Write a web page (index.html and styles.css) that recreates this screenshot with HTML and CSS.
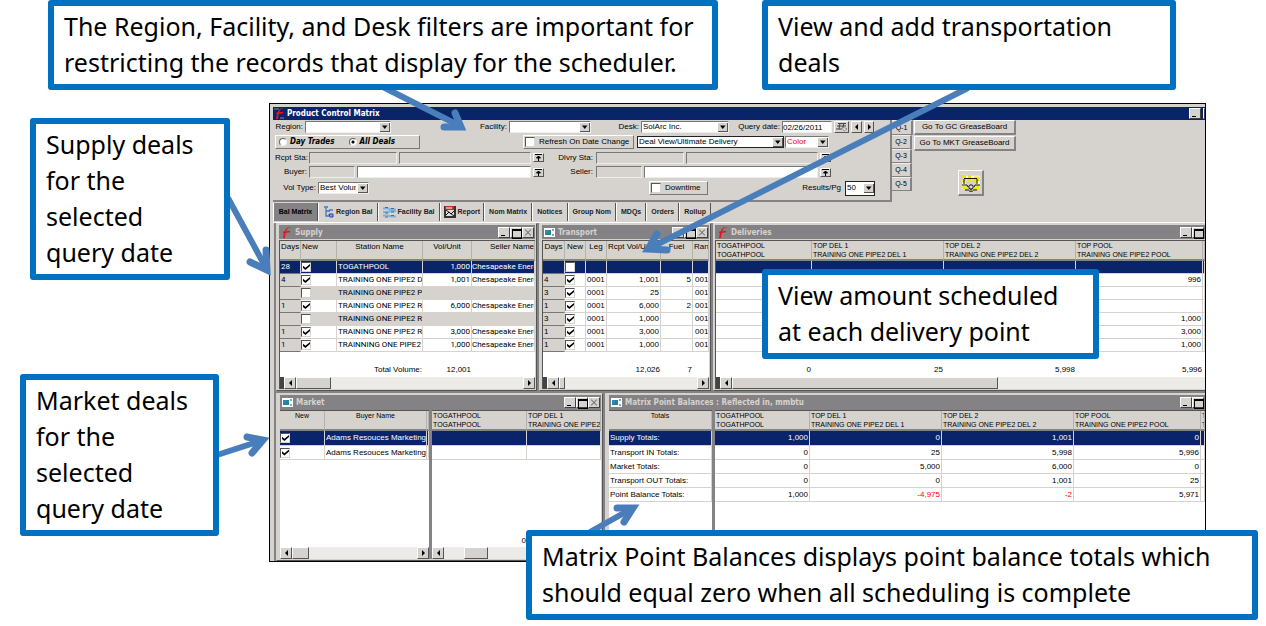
FILE: index.html
```html
<!DOCTYPE html>
<html lang="en">
<head>
<meta charset="utf-8">
<title>Product Control Matrix</title>
<link rel="stylesheet" href="styles.css">
</head>
<body>
<svg class="defs" aria-hidden="true">
  <symbol id="flame" viewBox="0 0 11 11"><path d="M0 1h5M6 10h4" stroke="#888" stroke-width="1"/><path d="M11 0C6 0 5 3 4 11H2C3 6 4 1 8 0z" fill="#e8141c"/><path d="M2 5.500l7-1" stroke="#e8141c" stroke-width="1.500"/></symbol>
  <symbol id="form" viewBox="0 0 11 9"><path d="M0 0h11v9H0z" fill="#fff"/><path d="M1 2h6v5H1z" fill="#1d8a8a"/><path d="M1 2h3v3H1z" fill="#3b7fd0"/><path d="M8 2h2M8 7h2" stroke="#247"/></symbol>
</svg>
<main class="page">
  <section class="app">
    <header class="titlebar">
      <svg class="logo"><use href="#flame"/></svg>
      <h1>Product Control Matrix</h1>
      <button class="wb min" aria-label="Minimize"></button><button class="wb edge" aria-label="Maximize"></button>
    </header>

    <div class="top">
      <form class="filters">
        <div class="row r1">
          <label for="region">Region:</label><select id="region"><option></option></select>
          <label for="facility">Facility:</label><select id="facility"><option></option></select>
          <label for="desk">Desk:</label><select id="desk"><option>SolArc Inc.</option></select>
          <label for="qd">Query date:</label><input id="qd" class="txt" value="02/26/2011">
          <button type="button" class="btn" aria-label="Calendar"><svg width="13" height="10" viewBox="0 0 13 10"><path d="M3 1.500h8M2 4h9M1 7h6M5 1l-1 6M9 1l-1 4" fill="none" stroke="#444"/><path d="M7 5l5 2-3 2z" fill="#fff" stroke="#555" stroke-width=".6"/></svg></button>
          <button type="button" class="btn" aria-label="Previous day"><i class="tri l"></i></button>
          <button type="button" class="btn" aria-label="Next day"><i class="tri r"></i></button>
        </div>
        <div class="row r2">
          <div class="raised trades">
            <label><input type="radio" name="t">Day Trades</label>
            <label><input type="radio" name="t" checked>All Deals</label>
          </div>
          <label class="raised check"><input type="checkbox">Refresh On Date Change</label>
          <select aria-label="View" class="dark"><option>Deal View/Ultimate Delivery</option></select>
          <select aria-label="Color" class="red"><option>Color</option></select>
        </div>
        <div class="row r3">
          <label for="rs">Rcpt Sta:</label><input id="rs" class="txt off"><input class="txt off" aria-label="Receipt station name">
          <button type="button" class="btn" aria-label="Find receipt station"><svg class="pin" viewBox="0 0 7 7"><path d="M0 .5h7M3.500 2v5M1.500 4l2-2 2 2z" stroke="#000"/></svg></button>
          <label for="ds">Dlvry Sta:</label><input id="ds" class="txt off"><input class="txt off" aria-label="Delivery station name">
          <button type="button" class="btn" aria-label="Find delivery station"><svg class="pin" viewBox="0 0 7 7"><path d="M0 .5h7M3.500 2v5M1.500 4l2-2 2 2z" stroke="#000"/></svg></button>
        </div>
        <div class="row r4">
          <label for="bu">Buyer:</label><input id="bu" class="txt off"><input class="txt" aria-label="Buyer name">
          <button type="button" class="btn" aria-label="Find buyer"><svg class="pin" viewBox="0 0 7 7"><path d="M0 .5h7M3.500 2v5M1.500 4l2-2 2 2z" stroke="#000"/></svg></button>
          <label for="se">Seller:</label><input id="se" class="txt off"><input class="txt" aria-label="Seller name">
          <button type="button" class="btn" aria-label="Find seller"><svg class="pin" viewBox="0 0 7 7"><path d="M0 .5h7M3.500 2v5M1.500 4l2-2 2 2z" stroke="#000"/></svg></button>
        </div>
        <div class="row r5">
          <label for="vt">Vol Type:</label><select id="vt"><option>Best Volume</option></select>
          <label class="raised check"><input type="checkbox">Downtime</label>
          <label for="pg">Results/Pg</label><select id="pg" class="dark small"><option>50</option></select>
        </div>
      </form>
      <nav class="qtabs">
        <button class="on">Q-1</button><button>Q-2</button><button>Q-3</button><button>Q-4</button><button>Q-5</button>
      </nav>
      <div class="boards">
        <button class="btn">Go To GC GreaseBoard</button>
        <button class="btn">Go To MKT GreaseBoard</button>
        <button class="btn pipe" aria-label="Pipeline"><svg width="20" height="18" viewBox="0 0 20 18"><path d="M1 2.500h3M5 3.500h12v10h-3M3 7v6.500h4" fill="none" stroke="#fff" stroke-width="3.500"/><path d="M0 2.500h5M7 2.500h3M13 4h4v3M17 11v3h-4M3 6v3M3 12v2h4M7 6h3M13 7h3" fill="none" stroke="#f0e800" stroke-width="3"/><path d="M3 4.500h13M16 5v5M1 11h5l1 2M19 11h-5l-1 2M3 5v5M4 16h4M12 16h4" fill="none" stroke="#111"/><circle cx="10" cy="13" r="2.200" fill="#ddd" stroke="#111"/><path d="M8.500 17.500l1.500-3 1.500 3z" fill="#f0e800" stroke="#111" stroke-width=".7"/></svg></button>
      </div>
    </div>

    <nav class="tabs">
      <button class="on">Bal Matrix</button>
      <button><svg width="11" height="12" viewBox="0 0 11 12"><path d="M1 1h4M3 2v8h3M3 5h4" fill="none" stroke="#3a78c8" stroke-width="1.300"/><path d="M6 4h4M6 8h4v3H7z" stroke="#2440b0" fill="#8ab"/></svg>Region Bal</button>
      <button><svg width="13" height="12" viewBox="0 0 13 12"><path d="M0 2.500h5l3 1h5M0 6h5l3-1h5M0 9.500h5l3 1h5" fill="none" stroke="#7fb2dc" stroke-width="2"/><path d="M2 1.500h3M8 2.500h3M2 7h3M8 6h3M2 11h3M8 9.500h3" stroke="#3a6fae"/></svg>Facility Bal</button>
      <button class="tight"><svg width="12" height="12" viewBox="0 0 12 12"><path d="M0 0h12v12H0z" fill="#333"/><path d="M2 3h8v7H2z" fill="#ddd"/><path d="M1 0h9v4H1z" fill="#d8232a"/><path d="M2 9l3-3 2 2 4-4M2 4l8 6" stroke="#111" fill="none"/><path d="M2 2h6" stroke="#fff"/></svg>Report</button>
      <button>Nom Matrix</button><button>Notices</button><button>Group Nom</button><button>MDQs</button><button>Orders</button><button>Rollup</button>
    </nav>

    <div class="desk">
      <div class="band upper">
        <section class="win supply">
          <header><svg class="logo"><use href="#flame"/></svg><h2>Supply</h2><button class="wb min" aria-label="Minimize"></button><button class="wb max" aria-label="Maximize"></button><button class="wb cls" aria-label="Close"></button></header>
          <div class="pane">
            <table>
              <colgroup><col class="c21"><col class="c36"><col class="c86"><col class="c49"><col></colgroup>
              <thead><tr><th>Days</th><th class="left">New</th><th>Station Name</th><th>Vol/Unit</th><th class="right">Seller Name</th></tr></thead>
              <tbody>
              <tr class="hl"><td class="day">28</td><td class="ck"><input type="checkbox" checked aria-label="New"></td><td>TOGATHPOOL</td><td class="n">1,000</td><td>Chesapeake Energy</td></tr>
              <tr><td class="day">4</td><td class="ck"><input type="checkbox" checked aria-label="New"></td><td>TRAINING ONE PIPE2 DEL</td><td class="n">1,001</td><td>Chesapeake Energy</td></tr>
              <tr class="dim"><td class="day"></td><td class="ck"><input type="checkbox" aria-label="New"></td><td>TRAINING ONE PIPE2 POOL</td><td></td><td></td></tr>
              <tr><td class="day">1</td><td class="ck"><input type="checkbox" checked aria-label="New"></td><td>TRAINING ONE PIPE2 REC</td><td class="n">6,000</td><td>Chesapeake Energy</td></tr>
              <tr class="dim"><td class="day"></td><td class="ck"><input type="checkbox" aria-label="New"></td><td>TRAINING ONE PIPE2 REC</td><td></td><td></td></tr>
              <tr><td class="day">1</td><td class="ck"><input type="checkbox" checked aria-label="New"></td><td>TRAINING ONE PIPE2 REC</td><td class="n">3,000</td><td>Chesapeake Energy</td></tr>
              <tr><td class="day">1</td><td class="ck"><input type="checkbox" checked aria-label="New"></td><td>TRAINNING ONE PIPE2</td><td class="n">1,000</td><td>Chesapeake Energy</td></tr>
              </tbody>
              <tfoot><tr><td></td><td></td><td class="n">Total Volume:</td><td class="n">12,001</td><td></td></tr></tfoot>
            </table>
            <div class="sb"><i class="stub"></i><button aria-label="Scroll left"><i class="tri l"></i></button><i class="thumb w35"></i><button class="end" aria-label="Scroll right"><i class="tri r"></i></button></div>
          </div>
        </section>

        <section class="win transport">
          <header><svg class="fico"><use href="#form"/></svg><h2>Transport</h2><button class="wb min" aria-label="Minimize"></button><button class="wb max" aria-label="Maximize"></button><button class="wb cls" aria-label="Close"></button></header>
          <div class="pane">
            <table>
              <colgroup><col class="c22"><col class="c21"><col class="c21"><col class="c54"><col class="c32"><col></colgroup>
              <thead><tr><th>Days</th><th>New</th><th>Leg</th><th class="left">Rcpt Vol/Unit</th><th>Fuel</th><th class="left">Ran</th></tr></thead>
              <tbody>
              <tr class="hl"><td class="day"></td><td class="ck"><input type="checkbox" aria-label="New"></td><td></td><td></td><td></td><td></td></tr>
              <tr><td class="day">4</td><td class="ck"><input type="checkbox" checked aria-label="New"></td><td>0001</td><td class="n">1,001</td><td class="n">5</td><td class="rk">001</td></tr>
              <tr><td class="day">3</td><td class="ck"><input type="checkbox" checked aria-label="New"></td><td>0001</td><td class="n">25</td><td></td><td class="rk">001</td></tr>
              <tr><td class="day">1</td><td class="ck"><input type="checkbox" checked aria-label="New"></td><td>0001</td><td class="n">6,000</td><td class="n">2</td><td class="rk">001</td></tr>
              <tr><td class="day">3</td><td class="ck"><input type="checkbox" checked aria-label="New"></td><td>0001</td><td class="n">1,000</td><td></td><td class="rk">001</td></tr>
              <tr><td class="day">1</td><td class="ck"><input type="checkbox" checked aria-label="New"></td><td>0001</td><td class="n">3,000</td><td></td><td class="rk">001</td></tr>
              <tr><td class="day">1</td><td class="ck"><input type="checkbox" checked aria-label="New"></td><td>0001</td><td class="n">1,000</td><td></td><td class="rk">001</td></tr>
              </tbody>
              <tfoot><tr><td></td><td></td><td></td><td class="n">12,026</td><td class="n">7</td><td></td></tr></tfoot>
            </table>
            <div class="sb"><i class="stub"></i><button aria-label="Scroll left"><i class="tri l"></i></button><i class="thumb w6"></i><button class="end" aria-label="Scroll right"><i class="tri r"></i></button></div>
          </div>
        </section>

        <section class="win deliveries">
          <header><svg class="logo"><use href="#flame"/></svg><h2>Deliveries</h2><button class="wb min" aria-label="Minimize"></button><button class="wb max" aria-label="Maximize"></button></header>
          <div class="pane">
            <table>
              <colgroup><col class="c96"><col class="c132"><col class="c132"><col class="c127"><col></colgroup>
              <thead><tr class="two"><th>TOGATHPOOL<br>TOGATHPOOL</th><th>TOP DEL 1<br>TRAINING ONE PIPE2 DEL 1</th><th>TOP DEL 2<br>TRAINING ONE PIPE2 DEL 2</th><th>TOP POOL<br>TRAINING ONE PIPE2 POOL</th><th>T<br>T</th></tr></thead>
              <tbody>
              <tr class="hl"><td></td><td></td><td></td><td></td><td></td></tr>
              <tr><td></td><td></td><td></td><td class="n">996</td><td></td></tr>
              <tr><td></td><td></td><td></td><td></td><td></td></tr>
              <tr><td></td><td></td><td></td><td></td><td></td></tr>
              <tr><td></td><td></td><td></td><td class="n">1,000</td><td></td></tr>
              <tr><td></td><td></td><td></td><td class="n">3,000</td><td></td></tr>
              <tr><td></td><td></td><td></td><td class="n">1,000</td><td></td></tr>
              </tbody>
              <tfoot><tr><td class="n">0</td><td class="n">25</td><td class="n">5,998</td><td class="n">5,996</td><td></td></tr></tfoot>
            </table>
            <div class="sb"><i class="stub"></i><button aria-label="Scroll left"><i class="tri l"></i></button><i class="thumb w265"></i></div>
          </div>
        </section>
      </div>

      <div class="band lower">
        <section class="win market">
          <header><svg class="fico"><use href="#form"/></svg><h2>Market</h2><button class="wb min" aria-label="Minimize"></button><button class="wb max" aria-label="Maximize"></button><button class="wb cls" aria-label="Close"></button></header>
          <div class="split">
            <div class="pane left">
              <table>
                <colgroup><col class="c45"><col class="c102"><col></colgroup>
                <thead><tr class="two mid"><th>New</th><th>Buyer Name</th><th></th></tr></thead>
                <tbody>
                <tr class="hl"><td class="ck"><input type="checkbox" checked aria-label="New"></td><td>Adams Resouces Marketing</td><td></td></tr>
                <tr><td class="ck"><input type="checkbox" checked aria-label="New"></td><td>Adams Resouces Marketing</td><td></td></tr>
                </tbody>
              </table>
              <div class="sb"><button aria-label="Scroll left"><i class="tri l"></i></button><i class="thumb w16"></i><button class="end" aria-label="Scroll right"><i class="tri r"></i></button></div>
            </div>
            <div class="pane rest">
              <table>
                <colgroup><col class="c94"><col></colgroup>
                <thead><tr class="two"><th>TOGATHPOOL<br>TOGATHPOOL</th><th>TOP DEL 1<br>TRAINING ONE PIPE2</th></tr></thead>
                <tbody>
                <tr class="hl"><td></td><td></td></tr>
                <tr><td></td><td></td></tr>
                </tbody>
              </table>
              <div class="sum"><span>0</span></div>
              <div class="sb"><button aria-label="Scroll left"><i class="tri l"></i></button><i class="thumb mid24"></i></div>
            </div>
          </div>
        </section>

        <section class="win matrix">
          <header><svg class="fico"><use href="#form"/></svg><h2>Matrix Point Balances : Reflected in, mmbtu</h2><button class="wb min" aria-label="Minimize"></button><button class="wb max" aria-label="Maximize"></button></header>
          <div class="split">
            <div class="pane totals">
              <table>
                <thead><tr class="two mid"><th>Totals</th></tr></thead>
                <tbody>
                <tr class="hl"><td>Supply Totals:</td></tr>
                <tr><td>Transport IN Totals:</td></tr>
                <tr><td>Market Totals:</td></tr>
                <tr><td>Transport OUT Totals:</td></tr>
                <tr><td>Point Balance Totals:</td></tr>
                </tbody>
              </table>
            </div>
            <div class="pane rest">
              <table>
                <colgroup><col class="c94"><col class="c132"><col class="c132"><col class="c127"><col></colgroup>
                <thead><tr class="two"><th>TOGATHPOOL<br>TOGATHPOOL</th><th>TOP DEL 1<br>TRAINING ONE PIPE2 DEL 1</th><th>TOP DEL 2<br>TRAINING ONE PIPE2 DEL 2</th><th>TOP POOL<br>TRAINING ONE PIPE2 POOL</th><th>T<br>T</th></tr></thead>
                <tbody>
                <tr class="hl"><td class="n">1,000</td><td class="n">0</td><td class="n">1,001</td><td class="n">0</td><td></td></tr>
                <tr><td class="n">0</td><td class="n">25</td><td class="n">5,998</td><td class="n">5,996</td><td></td></tr>
                <tr><td class="n">0</td><td class="n">5,000</td><td class="n">6,000</td><td class="n">0</td><td></td></tr>
                <tr><td class="n">0</td><td class="n">0</td><td class="n">1,001</td><td class="n">25</td><td></td></tr>
                <tr><td class="n">1,000</td><td class="n neg">-4,975</td><td class="n neg">-2</td><td class="n">5,971</td><td></td></tr>
                </tbody>
              </table>
            </div>
          </div>
        </section>
      </div>
    </div>
  </section>

  <svg class="arrows" width="1266" height="626" viewBox="0 0 1266 626" aria-hidden="true">
    <path d="M383 87L460 126M968 88L648 249M228 198L266 268M217 455L263 440M590 532L633 508"/>
    <path class="head" d="M455 113L461 127L444 127M657 234L648 249L667 250M250 262L267 270L266 250M247 437L263 440L252 453M617 508L633 508L624 522"/>
  </svg>
  <aside class="note n1">The Region, Facility, and Desk filters are important for<br>restricting the records that display for the scheduler.</aside>
  <aside class="note n2">View and add transportation<br>deals</aside>
  <aside class="note n3">Supply deals<br>for the<br>selected<br>query date</aside>
  <aside class="note n4">Market deals<br>for the<br>selected<br>query date</aside>
  <aside class="note n5">View amount scheduled<br>at each delivery point</aside>
  <aside class="note n6">Matrix Point Balances displays point balance totals which<br>should equal zero when all scheduling is complete</aside>
</main>
</body>
</html>
```
FILE: styles.css
```css
* { box-sizing: border-box; }
body { margin: 0; background: #fff; color: #000; font: 8px/10px "Liberation Sans", Arial, sans-serif; }
h1, h2 { margin: 0; font: bold 8px/13px "DejaVu Sans Condensed", "DejaVu Sans", sans-serif; }
button, input, select { font: inherit; color: inherit; margin: 0; padding: 0; border-radius: 0; }
i { display: block; }
.defs { position: absolute; width: 0; height: 0; }
.page { position: relative; padding: 103px 60px 65px 269px; }

.app { border: 1px solid #000; background: #d6d3ce; padding: 3px 0 0 3px; overflow: hidden; }
.logo { width: 11px; height: 11px; flex: none; }
.fico { width: 11px; height: 9px; flex: none; }
.titlebar { display: flex; align-items: center; gap: 2px; height: 13px; padding-left: 1px; background: #0a246a; color: #fff; }
.titlebar h1 { flex: 1; }
.wb { position: relative; flex: none; width: 12px; height: 11px; background: #d6d3ce; border: 1px solid; border-color: #fff #404040 #404040 #fff; }
.min::before { content: ""; position: absolute; left: 2px; bottom: 1px; width: 4px; height: 1px; background: #000; }
.max::before { content: ""; position: absolute; left: 1px; top: 1px; width: 8px; height: 7px; border: 1px solid #000; border-top-width: 2px; }
.cls::before, .cls::after { content: ""; position: absolute; left: 1px; top: 4px; width: 8px; height: 1px; background: #777; transform: rotate(45deg); }
.cls::after { transform: rotate(-45deg); }
.titlebar .edge { width: 2px; }

/* filter bar */
.top { display: flex; height: 82px; }
.filters { flex: none; width: 619px; border-right: 2px solid #848284; border-bottom: 2px solid #848284; padding-left: 2px; white-space: nowrap; }
.row { display: grid; align-items: center; }
.row > label { text-align: right; padding-right: 2px; }
.r1 { height: 14px; grid-template-columns: 30px 86px 118px 82px 50px 88px 53px 50px 17px 13px 12px; }
.r2 { height: 16px; grid-template-columns: 145px 216px 149px 44px; }
.r3 { height: 15px; grid-template-columns: 34px 90px 134px 13px 50px 90px 134px 13px; }
.r4 { height: 14px; grid-template-columns: 34px 48px 176px 13px 50px 48px 176px 13px; }
.r5 { height: 18px; grid-template-columns: 43px 51px 280px 59px 137px 30px; }
.r2 > .check { margin-left: 103px; width: 111px; }
.r2 > .dark { margin-left: 1px; width: 147px; }
.r3 .txt, .r4 .txt { width: calc(100% - 2px); }
.r3 .btn, .r4 .btn { width: 11px; height: 9px; }
.r3 > :nth-child(5), .r4 > :nth-child(5) { padding-right: 3px; }
.r5 > :nth-child(3) { grid-column: 4; }
.r5 > :nth-child(4) { padding-right: 4px; }
.r5 > .small { height: 15px; }
.txt { display: block; width: 100%; height: 12px; background: #fff; border: 1px solid; border-color: #777 #eee #eee #777; }
.off { background: #d6d3ce; }
select { appearance: none; width: 100%; height: 12px; padding: 0 12px 0 1px; border: 1px solid; border-color: #777 #eee #eee #777; background: #fff url("data:image/svg+xml,%3Csvg xmlns='http://www.w3.org/2000/svg' width='11' height='10'%3E%3Cpath d='M0 0h11v10H0z' fill='%23fff'/%3E%3Cpath d='M1 1h10v9H1z' fill='%23555'/%3E%3Cpath d='M1 1h9v8H1z' fill='%23d6d3ce'/%3E%3Cpath d='M3 3.500h5.500L5.750 7z'/%3E%3C/svg%3E") no-repeat right center; }
select.dark { border-color: #222; }
.red { color: #f00; }
.btn { display: flex; align-items: center; justify-content: center; height: 12px; background: #d6d3ce; border: 1px solid; border-color: #fff #555 #555 #fff; }
.r1 .btn { margin-left: 2px; }
.pin { width: 7px; height: 7px; }
.tri { width: 0; height: 0; border: 3px solid transparent; }
.tri.l { border-right: 3px solid #000; border-left-width: 0; }
.tri.r { border-left: 3px solid #000; border-right-width: 0; }
.raised { display: flex; align-items: center; height: 14px; border: 1px solid; border-color: #fff #777 #777 #fff; }
.trades { gap: 14px; padding-left: 3px; font: italic bold 8px/10px "DejaVu Sans Condensed", "DejaVu Sans", sans-serif; }
.trades label { display: flex; align-items: center; gap: 3px; }
input[type=radio] { appearance: none; width: 8px; height: 8px; border: 1px solid; border-color: #666 #eee #eee #666; border-radius: 50%; background: #fff; }
input[type=radio]:checked { background: radial-gradient(#000 0 1px, #fff 2px); }
input[type=checkbox] { appearance: none; display: block; flex: none; position: relative; width: 10px; height: 10px; background: #fff; border: 1px solid; border-color: #555 #d6d3ce #d6d3ce #555; }
input[type=checkbox]:checked::before { content: ""; position: absolute; left: 1px; top: 1px; width: 7px; height: 6px; background: #000; clip-path: polygon(0 30%, 35% 62%, 100% 0, 100% 35%, 35% 100%, 0 68%); }
.row > .check { gap: 4px; padding: 0 0 0 1px; text-align: left; }
.qtabs { display: flex; flex-direction: column; width: 21px; }
.qtabs button { width: 20px; height: 14px; border: 0; border-right: 2px solid #848284; border-bottom: 1px solid #848284; border-top: 1px solid #eee; background: #d6d3ce; font-size: 7px; }
.qtabs .on { height: 15px; width: 21px; }
.boards { display: flex; flex-direction: column; margin-left: 1px; gap: 1px; }
.boards .btn { width: 102px; height: 15px; border-width: 1px 2px 2px 1px; border-color: #fff #848284 #848284 #fff; }
.boards .pipe { width: 26px; height: 26px; margin: 18px 0 0 44px; }

.tabs { display: flex; height: 20px; margin-top: 1px; border-bottom: 1px solid #fff; }
.tabs button { display: flex; align-items: center; gap: 2px; justify-content: center; padding: 0 4px; height: 18px; background: #d6d3ce; border: 0; border-right: 1px solid #555; border-left: 1px solid #fff; font-size: 7px; font-weight: bold; color: #222; white-space: nowrap; }
.tabs .on { background: #848284; width: 45px; color: #000; }
.tabs .tight { padding: 0 3px; }

/* child windows */
.desk { border-left: 2px solid #848284; margin-left: 1px; background: #848284; }
.band { display: flex; gap: 2px; }
.band.upper { height: 168px; }
.band.lower { height: 168px; margin-top: 2px; }
.win { flex: none; display: flex; flex-direction: column; border: 1px solid; border-color: #d6d3ce #555 #555 #d6d3ce; padding: 1px 1px 1px 2px; min-width: 0; background: #d6d3ce; }
.win > header { display: flex; align-items: center; height: 14px; padding: 0 1px 0 2px; background: #848284; color: #d6d3ce; }
.win > header h2 { flex: 1; margin-left: 3px; }
.supply { width: 261px; }
.transport { width: 172px; }
.market { width: 327px; }
.lower .win { padding-left: 3px; }
.deliveries, .matrix { flex: 1; border-right: 0; padding-right: 0; }
.deliveries { padding-left: 1px; }
.pane { flex: 1; display: flex; flex-direction: column; min-width: 0; background: #fff; border: 1px solid #555; border-width: 1px 0 0 1px; margin-top: 1px; overflow: hidden; }
table { width: 100%; table-layout: fixed; border-collapse: separate; border-spacing: 0; }
th, td { padding: 0 1px; white-space: nowrap; overflow: hidden; text-align: left; }
th { height: 20px; padding-top: 1px; vertical-align: top; font-weight: normal; text-align: center; line-height: 10px; background: #d6d3ce; border-right: 1px solid #b5b2ad; border-bottom: 2px solid #848284; }
.two th { font: 7px/9px "Liberation Sans", Arial, sans-serif; text-align: left; padding-top: 0; }
.two.mid th { text-align: center; }
th.left { text-align: left; }
th.right { text-align: right; padding: 1px 0 0; }
tbody td { height: 13px; border-right: 1px solid #d6d3ce; border-bottom: 1px solid #d6d3ce; }
.n { text-align: right; }
.supply tbody td { font-family: Roboto, sans-serif; }
.supply tbody td:last-child { padding: 0; }
.day { background: #d6d3ce; border-bottom-color: #777; }
.hl td { background: #0a246a; color: #fff; }
.dim td { background: #d6d3ce; }
td.ck { padding: 0; }
.rk { padding-left: 2px; }
.neg { color: #f00; }
tfoot td { height: 24px; padding-top: 12px; }
.c21 { width: 21px; } .c22 { width: 22px; } .c32 { width: 32px; } .c36 { width: 36px; } .c45 { width: 45px; }
.c49 { width: 49px; } .c54 { width: 54px; } .c86 { width: 86px; } .c94 { width: 95px; } .c96 { width: 96px; }
.c102 { width: 102px; } .c127 { width: 127px; } .c132 { width: 132px; }

.sb { display: flex; flex: none; height: 12px; margin-top: auto; background: #ecebe8; }
.sb button { display: flex; align-items: center; justify-content: center; width: 12px; background: #d6d3ce; border: 1px solid; border-color: #fff #555 #555 #fff; }
.sb .end { margin-left: auto; }
.stub { width: 4px; background: #444; }
.thumb { background: #d6d3ce; border: 1px solid; border-color: #fff #555 #555 #fff; }
.w6 { width: 6px; } .w16 { width: 17px; } .w35 { width: 35px; } .w265 { width: 266px; }
.mid24 { width: 24px; margin-left: 20px; }

.split { flex: 1; display: flex; gap: 3px; background: #848284; }
.split .pane { border-left: 0; }
.split .left { flex: none; width: 149px; }
.split .totals { flex: none; width: 103px; }
.lower tbody td { height: 14px; }
.lower .hl td { height: 15px; }
.sum { width: 95px; margin-top: auto; text-align: right; padding-right: 1px; }
.sum + .sb { margin-top: 1px; }

/* annotations laid over the window */
.arrows { position: absolute; left: 0; top: 0; fill: none; stroke: #4a7ebb; stroke-width: 6; pointer-events: none; }
.head { stroke-width: 7; stroke-linecap: round; }
.note { position: absolute; background: #fff; border: 6px solid #0070c0; border-radius: 3px; padding: 2px 10px 4px; font: 25px/36px "Noto Sans", "Open Sans", sans-serif; white-space: nowrap; }
.n1 { left: 48px; top: 0; width: 670px; }
.n2 { left: 762px; top: 0; width: 414px; }
.n3 { left: 30px; top: 118px; width: 200px; }
.n4 { left: 20px; top: 374px; width: 199px; }
.n5 { left: 762px; top: 269px; width: 337px; }
.n6 { left: 526px; top: 530px; width: 732px; }
```
